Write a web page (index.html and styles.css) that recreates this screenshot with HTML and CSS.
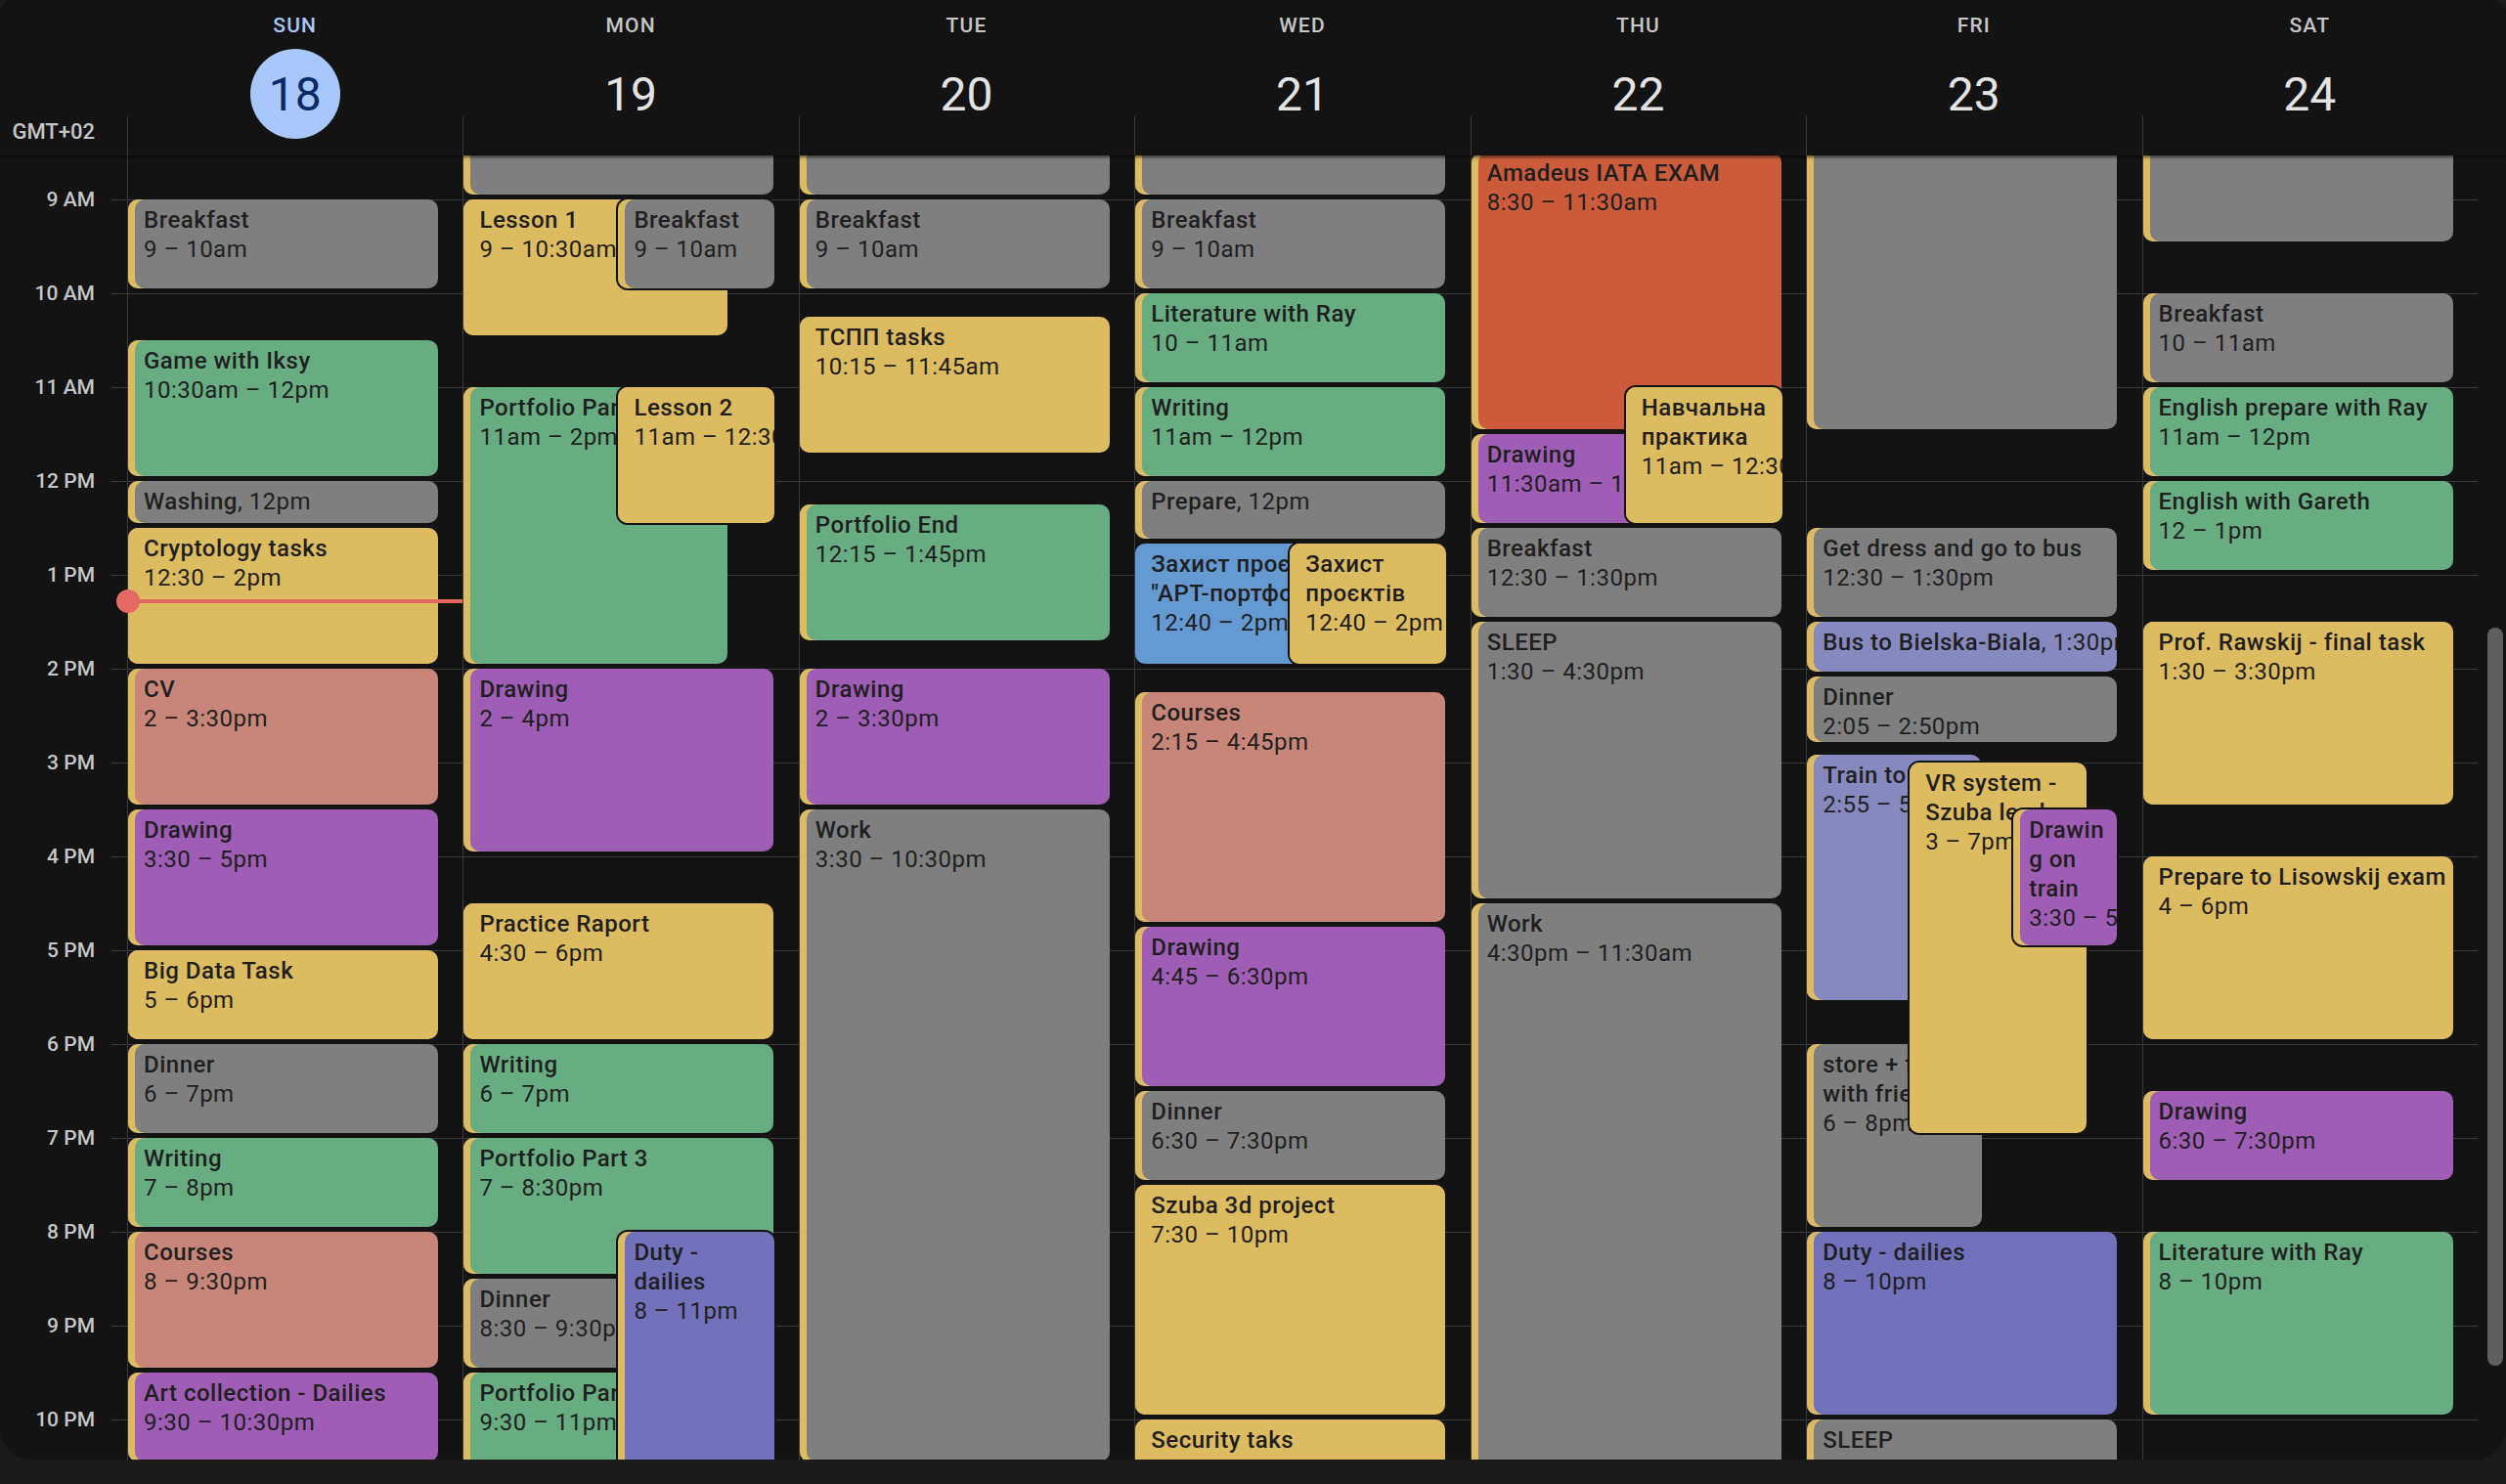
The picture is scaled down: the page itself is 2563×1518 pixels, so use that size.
FILE: index.html
```html
<!DOCTYPE html>
<html lang="en">
<head>
  <meta charset="UTF-8" />
  <title>Week view</title>
  <link rel="stylesheet" href="styles.css">
</head>
<body>

  <div class="calendar">
    <div class="head">
      <div class="tz">GMT+02</div>
      <div class="day today"><div class="day-name">SUN</div><div class="day-num">18</div></div>
      <div class="day"><div class="day-name">MON</div><div class="day-num">19</div></div>
      <div class="day"><div class="day-name">TUE</div><div class="day-num">20</div></div>
      <div class="day"><div class="day-name">WED</div><div class="day-num">21</div></div>
      <div class="day"><div class="day-name">THU</div><div class="day-num">22</div></div>
      <div class="day"><div class="day-name">FRI</div><div class="day-num">23</div></div>
      <div class="day"><div class="day-name">SAT</div><div class="day-num">24</div></div>
      <div></div>
    </div>

    <div class="grid" id="grid">
      <div class="times"><div class="times-inner" id="times"></div></div>
      <!-- day columns are added here -->
    </div>
  </div>

  <script>
    const HOUR = 96;
    const OFFSET = -51; // where 8 AM sits inside the scrolled grid

    // day, start, end, title, time, colour, extra
    const events = [
      [0, 9, 10, "Breakfast", "9 – 10am", "gray"],
      [0, 10.5, 12, "Game with Iksy", "10:30am – 12pm", "green"],
      [0, 12, 12.5, "Washing", "12pm", "gray", { compact: true }],
      [0, 12.5, 14, "Cryptology tasks", "12:30 – 2pm", "yellow"],
      [0, 14, 15.5, "CV", "2 – 3:30pm", "salmon"],
      [0, 15.5, 17, "Drawing", "3:30 – 5pm", "purple"],
      [0, 17, 18, "Big Data Task", "5 – 6pm", "yellow"],
      [0, 18, 19, "Dinner", "6 – 7pm", "gray"],
      [0, 19, 20, "Writing", "7 – 8pm", "green"],
      [0, 20, 21.5, "Courses", "8 – 9:30pm", "salmon"],
      [0, 21.5, 22.5, "Art collection - Dailies", "9:30 – 10:30pm", "purple"],

      [1, 7, 9, "", "", "gray"],
      [1, 9, 10.5, "Lesson 1", "9 – 10:30am", "yellow", { w: 270 }],
      [1, 9, 10, "Breakfast", "9 – 10am", "gray", { l: 158, w: 160, over: true }],
      [1, 11, 14, "Portfolio Part 2", "11am – 2pm", "green", { w: 270 }],
      [1, 11, 12.5, "Lesson 2", "11am – 12:30pm", "yellow", { l: 158, w: 160, over: true }],
      [1, 14, 16, "Drawing", "2 – 4pm", "purple"],
      [1, 16.5, 18, "Practice Raport", "4:30 – 6pm", "yellow"],
      [1, 18, 19, "Writing", "6 – 7pm", "green"],
      [1, 19, 20.5, "Portfolio Part 3", "7 – 8:30pm", "green"],
      [1, 20.5, 21.5, "Dinner", "8:30 – 9:30pm", "gray", { w: 270 }],
      [1, 21.5, 23, "Portfolio Part 4", "9:30 – 11pm", "green", { w: 270 }],
      [1, 20, 23, "Duty - dailies", "8 – 11pm", "duty", { l: 158, w: 160, over: true }],

      [2, 7, 9, "", "", "gray"],
      [2, 9, 10, "Breakfast", "9 – 10am", "gray"],
      [2, 10.25, 11.75, "ТСПП tasks", "10:15 – 11:45am", "yellow"],
      [2, 12.25, 13.75, "Portfolio End", "12:15 – 1:45pm", "green"],
      [2, 14, 15.5, "Drawing", "2 – 3:30pm", "purple"],
      [2, 15.5, 22.5, "Work", "3:30 – 10:30pm", "gray"],

      [3, 7, 9, "", "", "gray"],
      [3, 9, 10, "Breakfast", "9 – 10am", "gray"],
      [3, 10, 11, "Literature with Ray", "10 – 11am", "green"],
      [3, 11, 12, "Writing", "11am – 12pm", "green"],
      [3, 12, 12 + 40 / 60, "Prepare", "12pm", "gray", { compact: true }],
      [3, 12 + 40 / 60, 14, "Захист проєктів \"АРТ-портфоліо\"", "12:40 – 2pm", "blue", { w: 270, plain: true }],
      [3, 12 + 40 / 60, 14, "Захист проєктів", "12:40 – 2pm", "yellow", { l: 158, w: 160, over: true }],
      [3, 14.25, 16.75, "Courses", "2:15 – 4:45pm", "salmon"],
      [3, 16.75, 18.5, "Drawing", "4:45 – 6:30pm", "purple"],
      [3, 18.5, 19.5, "Dinner", "6:30 – 7:30pm", "gray"],
      [3, 19.5, 22, "Szuba 3d project", "7:30 – 10pm", "yellow"],
      [3, 22, 23, "Security taks", "10 – 11pm", "yellow"],

      [4, 8.5, 11.5, "Amadeus IATA EXAM", "8:30 – 11:30am", "red"],
      [4, 11.5, 12.5, "Drawing", "11:30am – 12:30pm", "purple", { w: 270 }],
      [4, 11, 12.5, "Навчальна практика", "11am – 12:30pm", "yellow", { l: 158, w: 160, over: true }],
      [4, 12.5, 13.5, "Breakfast", "12:30 – 1:30pm", "gray"],
      [4, 13.5, 16.5, "SLEEP", "1:30 – 4:30pm", "gray"],
      [4, 16.5, 24, "Work", "4:30pm – 11:30am", "gray"],

      [5, 7, 11.5, "", "", "gray"],
      [5, 12.5, 13.5, "Get dress and go to bus", "12:30 – 1:30pm", "gray"],
      [5, 13.5, 14 + 5 / 60, "Bus to Bielska-Biala", "1:30pm", "lav", { compact: true }],
      [5, 14 + 5 / 60, 14 + 50 / 60, "Dinner", "2:05 – 2:50pm", "gray"],
      [5, 14 + 55 / 60, 17 + 35 / 60, "Train to Biała", "2:55 – 5:35pm", "lav", { w: 178 }],
      [5, 18, 20, "store + food with friends", "6 – 8pm", "gray", { w: 179 }],
      [5, 15, 19, "VR system - Szuba lead", "3 – 7pm", "yellow", { l: 105, w: 181, over: true }],
      [5, 15.5, 17, "Drawing on train", "3:30 – 5pm", "purple", { l: 211, w: 106, over: true }],
      [5, 20, 22, "Duty - dailies", "8 – 10pm", "duty"],
      [5, 22, 24, "SLEEP", "10pm – 6am", "gray"],

      [6, 7, 9.5, "", "", "gray"],
      [6, 10, 11, "Breakfast", "10 – 11am", "gray"],
      [6, 11, 12, "English prepare with Ray", "11am – 12pm", "green"],
      [6, 12, 13, "English with Gareth", "12 – 1pm", "green"],
      [6, 13.5, 15.5, "Prof. Rawskij - final task", "1:30 – 3:30pm", "yellow"],
      [6, 16, 18, "Prepare to Lisowskij exam", "4 – 6pm", "yellow"],
      [6, 18.5, 19.5, "Drawing", "6:30 – 7:30pm", "purple"],
      [6, 20, 22, "Literature with Ray", "8 – 10pm", "green"]
    ];

    const hours = ["8 AM", "9 AM", "10 AM", "11 AM", "12 PM", "1 PM", "2 PM", "3 PM", "4 PM",
      "5 PM", "6 PM", "7 PM", "8 PM", "9 PM", "10 PM", "11 PM"];

    const times = document.getElementById("times");
    hours.forEach(h => {
      const slot = document.createElement("div");
      slot.className = "hour";
      slot.innerHTML = `<span>${h}</span>`;
      times.appendChild(slot);
    });

    const grid = document.getElementById("grid");
    const cols = [];
    for (let d = 0; d < 7; d++) {
      const col = document.createElement("div");
      col.className = "col";
      grid.appendChild(col);
      cols.push(col);
    }
    const track = document.createElement("div");
    track.className = "track";
    track.innerHTML = `<div class="thumb"></div>`;
    grid.appendChild(track);

    events.forEach(([day, start, end, title, time, colour, extra = {}]) => {
      const ev = document.createElement("div");
      ev.className = `ev ${colour}`;
      if (extra.over) ev.classList.add("over");
      if (extra.plain) ev.classList.add("plain");
      if (extra.compact) ev.classList.add("compact");

      const top = (start - 8) * HOUR + OFFSET;
      const height = (end - start) * HOUR - 5;
      ev.style.top = top + "px";
      ev.style.height = height + "px";
      ev.style.left = (extra.l || 0) + "px";
      ev.style.width = (extra.w || 317) + "px";

      if (title) {
        ev.innerHTML = extra.compact
          ? `<span class="t">${title}</span>, ${time}`
          : `<div class="t">${title}</div><div class="d">${time}</div>`;
      }
      cols[day].appendChild(ev);
    });

    // current time marker (1:17 pm)
    const now = document.createElement("div");
    now.className = "now";
    now.style.top = ((13 + 17 / 60 - 8) * HOUR + OFFSET - 2) + "px";
    cols[0].appendChild(now);
  </script>

</body>
</html>
```

FILE: styles.css
```css
body {
  margin: 0;
  background: #1b1b1b;
  font-family: Roboto, "Noto Sans", sans-serif;
  color: #e3e3e3;
}

.calendar {
  height: 1493px;
  background: #131313;
  border-radius: 14px 14px 32px 32px;
  overflow: hidden;
}

/* header */
.head {
  display: grid;
  grid-template-columns: 130px repeat(7, 1fr) 29px;
  height: 159px;
  position: relative;
  z-index: 5;
  background: #131313;
  box-shadow: 0 2px 3px rgba(0, 0, 0, 0.55);
}

.tz {
  align-self: end;
  text-align: right;
  padding: 0 33px 12px 0;
  font-size: 22px;
  font-weight: 500;
  line-height: 24px;
  color: #c4c7c5;
}

.day {
  display: flex;
  flex-direction: column;
  align-items: center;
  padding-top: 14px;
  background: linear-gradient(#3a3a3a, #3a3a3a) left bottom / 1px 40px no-repeat;
}

.day-name {
  font-size: 21px;
  font-weight: 500;
  letter-spacing: 1.2px;
  line-height: 24px;
  color: #c4c7c5;
}

.day-num {
  margin-top: 12px;
  width: 92px;
  height: 92px;
  display: flex;
  align-items: center;
  justify-content: center;
  border-radius: 50%;
  font-size: 48px;
  color: #e3e3e3;
}

.day.today .day-name {
  color: #a8c7fa;
}

.day.today .day-num {
  background: #a8c7fa;
  color: #0a2a66;
}

/* grid */
.grid {
  display: grid;
  grid-template-columns: 130px repeat(7, 1fr) 29px;
  height: 1334px;
  overflow: hidden;
}

.times-inner {
  margin-top: -51px;
}

.hour {
  height: 96px;
  background: linear-gradient(#3a3a3a, #3a3a3a) right top / 16px 1px no-repeat;
}

.hour span {
  display: block;
  text-align: right;
  padding-right: 33px;
  transform: translateY(-50%);
  font-size: 21px;
  font-weight: 500;
  line-height: 24px;
  color: #c4c7c5;
}

.col {
  position: relative;
  border-left: 1px solid #3a3a3a;
  background-image: linear-gradient(#3a3a3a 1px, transparent 1px);
  background-size: 100% 96px;
  background-position: 0 45px;
}

.track {
  padding-top: 483px;
}

.thumb {
  width: 16px;
  height: 755px;
  margin-left: 10px;
  border-radius: 8px;
  background: #5f5f5f;
}

/* events */
.ev {
  position: absolute;
  box-sizing: border-box;
  padding: 6px 2px 0 16px;
  border-radius: 10px;
  overflow: hidden;
  overflow-wrap: anywhere;
  font-size: 24px;
  line-height: 30px;
  letter-spacing: 0.5px;
  color: #1f1f1f;
  box-shadow: inset 7px 0 0 #ddbb60;
}

.ev .t {
  font-weight: 500;
}

.ev .d {
  white-space: nowrap;
}

.ev.compact {
  white-space: nowrap;
}

.ev.over {
  z-index: 2;
  box-shadow: inset 7px 0 0 #ddbb60, 0 0 0 2px #131313;
}

.ev.plain {
  box-shadow: none;
}

.gray { background: #7f7f7f; }
.green { background: #68ad82; }
.yellow { background: #ddbb60; }
.salmon { background: #c8867b; }
.purple { background: #9f5db5; }
.red { background: #cb5b3b; }
.blue { background: #6499d1; }
.lav { background: #8589c0; }
.duty { background: #7172bb; }

/* now line */
.now {
  position: absolute;
  left: 0;
  right: 0;
  height: 4px;
  background: #e46962;
  z-index: 4;
}

.now::before {
  content: "";
  position: absolute;
  left: -12px;
  top: -10px;
  width: 24px;
  height: 24px;
  border-radius: 50%;
  background: #e46962;
}
```
